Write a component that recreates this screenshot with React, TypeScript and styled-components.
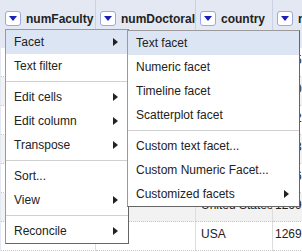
import React from 'react';
import styled, { createGlobalStyle } from 'styled-components';

const GlobalStyle = createGlobalStyle`
  html, body {
    margin: 0;
    padding: 0;
    background: #fff;
  }
  body {
    font-family: 'Liberation Sans', Arial, sans-serif;
    font-size: 12px;
    color: #222;
    overflow: hidden;
  }
`;

const Page = styled.div`
  position: relative;
  width: 302px;
  height: 252px;
  overflow: hidden;
`;

const Table = styled.div`
  display: grid;
  grid-template-columns: 95px 100px 77px 140px;
  border-left: 1px solid #e3e8f2;
  width: max-content;
`;

const HeadCell = styled.div`
  height: 48px;
  background: #e3e8f2;
  border-right: 1px solid #c9d1e6;
  display: flex;
  align-items: flex-start;
  gap: 5px;
  padding: 11px 4px 0 4px;
  box-sizing: border-box;
  font-weight: bold;
  color: #222;
  white-space: nowrap;
  overflow: hidden;
`;

const DropButton = styled.span`
  flex: none;
  width: 16px;
  height: 15px;
  box-sizing: border-box;
  border: 1px solid #9ba8e2;
  border-radius: 3px;
  background: #fff;
  display: flex;
  align-items: center;
  justify-content: center;

  &::after {
    content: '';
    border-left: 4px solid transparent;
    border-right: 4px solid transparent;
    border-top: 5px solid #1a1fb8;
  }
`;

const HeadLabel = styled.span`
  line-height: 16px;
`;

const Cell = styled.div<{ $shade: boolean; $pad: number }>`
  height: 29px;
  box-sizing: border-box;
  background: ${({ $shade }) => ($shade ? '#f2f2f2' : '#fff')};
  border-right: 1px solid #ddd;
  border-bottom: 1px dotted #c8c8c8;
  padding: 5px 4px 0 ${({ $pad }) => $pad}px;
  line-height: 14px;
  color: #222;
  white-space: nowrap;
  overflow: hidden;
`;

const Menu = styled.div<{ $width: number }>`
  position: absolute;
  width: ${({ $width }) => $width}px;
  background: #fff;
  border: 1px solid #9a9a9a;
  border-right-color: #666;
  border-bottom-color: #666;
  box-sizing: border-box;
`;

const MainMenu = styled(Menu)`
  left: 5px;
  top: 29px;
`;

const SubMenu = styled(Menu)`
  left: 121px;
  top: 0;
  z-index: 2;
`;

const Item = styled.div<{ $active?: boolean }>`
  position: relative;
  height: 24px;
  display: flex;
  align-items: center;
  justify-content: space-between;
  padding: 0 10px 0 8px;
  background: ${({ $active }) => ($active ? '#dce5f3' : 'transparent')};
  color: #222;
  white-space: nowrap;
`;

const Arrow = styled.span`
  width: 0;
  height: 0;
  border-top: 4px solid transparent;
  border-bottom: 4px solid transparent;
  border-left: 5px solid #222;
`;

const Separator = styled.div`
  height: 1px;
  background: #d0d0d0;
  margin: 3px 0;
`;

const columns = ['numFaculty', 'numDoctoral', 'country', 'numStudents'];
const cellPad = [5, 5, 5, 2];

const rows = [
  ['2250', '1210', 'USA', '2255'],
  ['1612', '886', 'USA', '1690'],
  ['3043', '1426', 'United Kingdom', '1842'],
  ['2805', '1133', 'USA', '1733'],
  ['1977', '903', 'United Kingdom', '1416'],
  ['', '', 'United States', '1269'],
  ['', '', 'USA', '1269'],
];

type Entry = { label: string; sub?: boolean; active?: boolean } | 'sep';

const mainItems: Entry[] = [
  { label: 'Facet', sub: true, active: true },
  { label: 'Text filter' },
  'sep',
  { label: 'Edit cells', sub: true },
  { label: 'Edit column', sub: true },
  { label: 'Transpose', sub: true },
  'sep',
  { label: 'Sort...' },
  { label: 'View', sub: true },
  'sep',
  { label: 'Reconcile', sub: true },
];

const facetItems: Entry[] = [
  { label: 'Text facet', active: true },
  { label: 'Numeric facet' },
  { label: 'Timeline facet' },
  { label: 'Scatterplot facet' },
  'sep',
  { label: 'Custom text facet...' },
  { label: 'Custom Numeric Facet...' },
  { label: 'Customized facets', sub: true },
];

const renderEntries = (entries: Entry[], withChild?: (label: string) => React.ReactNode) =>
  entries.map((e, i) =>
    e === 'sep' ? (
      <Separator key={i} />
    ) : (
      <Item key={i} $active={e.active}>
        <span>{e.label}</span>
        {e.sub && <Arrow />}
        {withChild && withChild(e.label)}
      </Item>
    )
  );

export default function App() {
  return (
    <Page>
      <GlobalStyle />
      <Table>
        {columns.map((c) => (
          <HeadCell key={c}>
            <DropButton />
            <HeadLabel>{c}</HeadLabel>
          </HeadCell>
        ))}
        {rows.map((r, ri) =>
          r.map((v, ci) => (
            <Cell key={`${ri}-${ci}`} $shade={ri % 2 === 1} $pad={cellPad[ci]}>
              {v}
            </Cell>
          ))
        )}
      </Table>

      <MainMenu $width={124}>
        {renderEntries(mainItems, (label) =>
          label === 'Facet' ? <SubMenu $width={173}>{renderEntries(facetItems)}</SubMenu> : null
        )}
      </MainMenu>
    </Page>
  );
}
